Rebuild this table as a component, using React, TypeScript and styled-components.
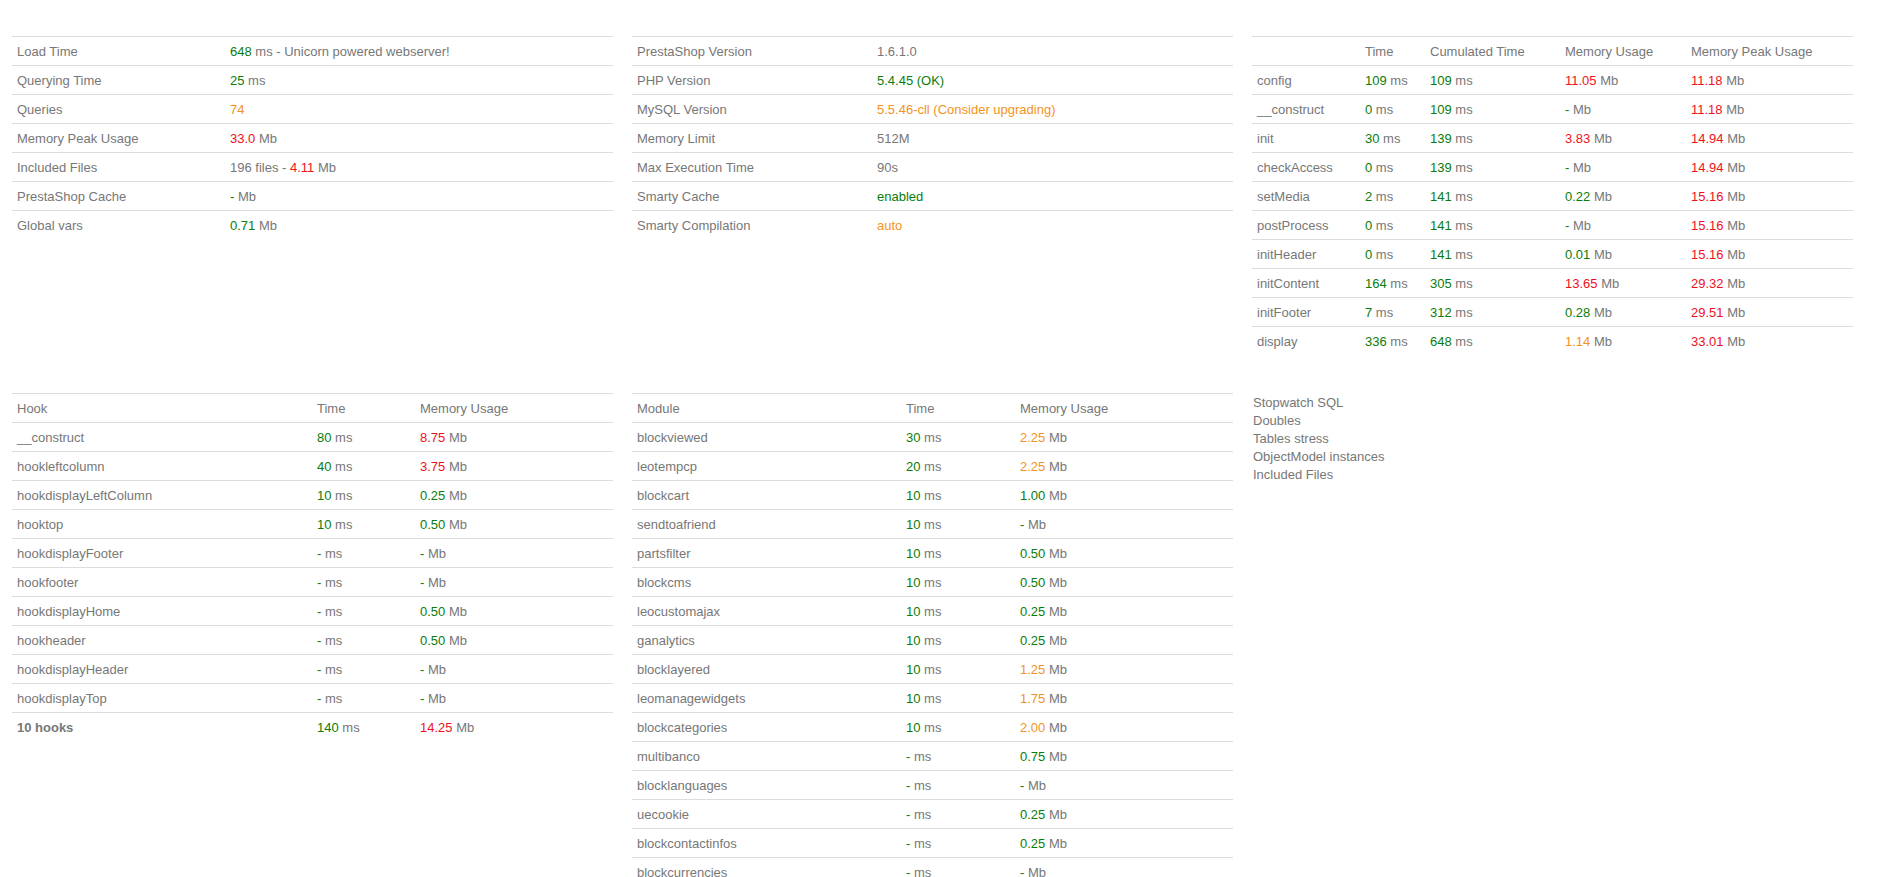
import React from 'react';
import styled, { createGlobalStyle } from 'styled-components';

type Tone = 'green' | 'orange' | 'red';

const tones: Record<Tone, string> = {
  green: '#0a7d0a',
  orange: '#f39322',
  red: '#f0101c',
};

const GlobalStyle = createGlobalStyle`
  html {
    scrollbar-width: none;
  }
  body {
    margin: 0;
    background: #fff;
    color: #777;
    font-family: 'Liberation Sans', Arial, sans-serif;
    font-size: 13px;
  }
`;

const Page = styled.div`
  display: grid;
  grid-template-columns: repeat(3, 601px);
  column-gap: 19px;
  row-gap: 38px;
  align-items: start;
  padding: 36px 0 0 12px;
`;

const Table = styled.table`
  width: 100%;
  table-layout: fixed;
  border-collapse: collapse;
  border-spacing: 0;
`;

const Col = styled.col<{ $w?: number }>`
  width: ${(p) => (p.$w ? `${p.$w}px` : 'auto')};
`;

const Row = styled.tr`
  border-top: 1px solid #ddd;
`;

const Cell = styled.td<{ $bold?: boolean }>`
  padding: 6px 5px 4px;
  line-height: 18px;
  text-align: left;
  white-space: nowrap;
  font-weight: ${(p) => (p.$bold ? 700 : 400)};
`;

const Head = styled.th`
  padding: 6px 5px 4px;
  line-height: 18px;
  text-align: left;
  font-weight: 400;
  white-space: nowrap;
`;

const Num = styled.span<{ $tone?: Tone }>`
  color: ${(p) => (p.$tone ? tones[p.$tone] : 'inherit')};
`;

const LinkList = styled.ul`
  list-style: none;
  margin: 0;
  padding: 1px 0 0 1px;
  line-height: 18px;
`;

const LinkItem = styled.li`
  color: #777;
`;

// "109 ms" style value: coloured number, grey unit
const ms = (n: string, tone: Tone = 'green') => (
  <>
    <Num $tone={tone}>{n}</Num> ms
  </>
);
const mb = (n: string, tone: Tone = 'green') => (
  <>
    <Num $tone={tone}>{n}</Num> Mb
  </>
);

const summary: [string, React.ReactNode][] = [
  ['Load Time', <>{ms('648')} - Unicorn powered webserver!</>],
  ['Querying Time', ms('25')],
  ['Queries', <Num $tone="orange">74</Num>],
  ['Memory Peak Usage', mb('33.0', 'red')],
  ['Included Files', <>196 files - {mb('4.11', 'red')}</>],
  ['PrestaShop Cache', mb('-')],
  ['Global vars', mb('0.71')],
];

const config: [string, React.ReactNode][] = [
  ['PrestaShop Version', '1.6.1.0'],
  ['PHP Version', <Num $tone="green">5.4.45 (OK)</Num>],
  ['MySQL Version', <Num $tone="orange">5.5.46-cll (Consider upgrading)</Num>],
  ['Memory Limit', '512M'],
  ['Max Execution Time', '90s'],
  ['Smarty Cache', <Num $tone="green">enabled</Num>],
  ['Smarty Compilation', <Num $tone="orange">auto</Num>],
];

const steps: [string, string, string, string, Tone, string][] = [
  ['config', '109', '109', '11.05', 'red', '11.18'],
  ['__construct', '0', '109', '-', 'green', '11.18'],
  ['init', '30', '139', '3.83', 'red', '14.94'],
  ['checkAccess', '0', '139', '-', 'green', '14.94'],
  ['setMedia', '2', '141', '0.22', 'green', '15.16'],
  ['postProcess', '0', '141', '-', 'green', '15.16'],
  ['initHeader', '0', '141', '0.01', 'green', '15.16'],
  ['initContent', '164', '305', '13.65', 'red', '29.32'],
  ['initFooter', '7', '312', '0.28', 'green', '29.51'],
  ['display', '336', '648', '1.14', 'orange', '33.01'],
];

const hooks: [string, string, string, Tone][] = [
  ['__construct', '80', '8.75', 'red'],
  ['hookleftcolumn', '40', '3.75', 'red'],
  ['hookdisplayLeftColumn', '10', '0.25', 'green'],
  ['hooktop', '10', '0.50', 'green'],
  ['hookdisplayFooter', '-', '-', 'green'],
  ['hookfooter', '-', '-', 'green'],
  ['hookdisplayHome', '-', '0.50', 'green'],
  ['hookheader', '-', '0.50', 'green'],
  ['hookdisplayHeader', '-', '-', 'green'],
  ['hookdisplayTop', '-', '-', 'green'],
];

const modules: [string, string, string, Tone][] = [
  ['blockviewed', '30', '2.25', 'orange'],
  ['leotempcp', '20', '2.25', 'orange'],
  ['blockcart', '10', '1.00', 'green'],
  ['sendtoafriend', '10', '-', 'green'],
  ['partsfilter', '10', '0.50', 'green'],
  ['blockcms', '10', '0.50', 'green'],
  ['leocustomajax', '10', '0.25', 'green'],
  ['ganalytics', '10', '0.25', 'green'],
  ['blocklayered', '10', '1.25', 'orange'],
  ['leomanagewidgets', '10', '1.75', 'orange'],
  ['blockcategories', '10', '2.00', 'orange'],
  ['multibanco', '-', '0.75', 'green'],
  ['blocklanguages', '-', '-', 'green'],
  ['uecookie', '-', '0.25', 'green'],
  ['blockcontactinfos', '-', '0.25', 'green'],
  ['blockcurrencies', '-', '-', 'green'],
];

const links = ['Stopwatch SQL', 'Doubles', 'Tables stress', 'ObjectModel instances', 'Included Files'];

const KeyValueTable = ({ rows, labelWidth }: { rows: [string, React.ReactNode][]; labelWidth: number }) => (
  <Table>
    <colgroup>
      <Col $w={labelWidth} />
      <Col />
    </colgroup>
    <tbody>
      {rows.map(([label, value]) => (
        <Row key={label}>
          <Cell>{label}</Cell>
          <Cell>{value}</Cell>
        </Row>
      ))}
    </tbody>
  </Table>
);

const App = () => {
  return (
    <>
      <GlobalStyle />
      <Page>
        <KeyValueTable rows={summary} labelWidth={213} />
        <KeyValueTable rows={config} labelWidth={240} />

        <Table>
          <colgroup>
            <Col $w={108} />
            <Col $w={65} />
            <Col $w={135} />
            <Col $w={126} />
            <Col />
          </colgroup>
          <thead>
            <Row>
              <Head />
              <Head>Time</Head>
              <Head>Cumulated Time</Head>
              <Head>Memory Usage</Head>
              <Head>Memory Peak Usage</Head>
            </Row>
          </thead>
          <tbody>
            {steps.map(([name, time, cumul, mem, tone, peak]) => (
              <Row key={name}>
                <Cell>{name}</Cell>
                <Cell>{ms(time)}</Cell>
                <Cell>{ms(cumul)}</Cell>
                <Cell>{mb(mem, tone)}</Cell>
                <Cell>{mb(peak, 'red')}</Cell>
              </Row>
            ))}
          </tbody>
        </Table>

        <Table>
          <colgroup>
            <Col $w={300} />
            <Col $w={103} />
            <Col />
          </colgroup>
          <thead>
            <Row>
              <Head>Hook</Head>
              <Head>Time</Head>
              <Head>Memory Usage</Head>
            </Row>
          </thead>
          <tbody>
            {hooks.map(([name, time, mem, tone]) => (
              <Row key={name}>
                <Cell>{name}</Cell>
                <Cell>{ms(time)}</Cell>
                <Cell>{mb(mem, tone)}</Cell>
              </Row>
            ))}
            <Row>
              <Cell $bold>10 hooks</Cell>
              <Cell>{ms('140')}</Cell>
              <Cell>{mb('14.25', 'red')}</Cell>
            </Row>
          </tbody>
        </Table>

        <Table>
          <colgroup>
            <Col $w={269} />
            <Col $w={114} />
            <Col />
          </colgroup>
          <thead>
            <Row>
              <Head>Module</Head>
              <Head>Time</Head>
              <Head>Memory Usage</Head>
            </Row>
          </thead>
          <tbody>
            {modules.map(([name, time, mem, tone]) => (
              <Row key={name}>
                <Cell>{name}</Cell>
                <Cell>{ms(time)}</Cell>
                <Cell>{mb(mem, tone)}</Cell>
              </Row>
            ))}
          </tbody>
        </Table>

        <LinkList>
          {links.map((l) => (
            <LinkItem key={l}>{l}</LinkItem>
          ))}
        </LinkList>
      </Page>
    </>
  );
};

export default App;
